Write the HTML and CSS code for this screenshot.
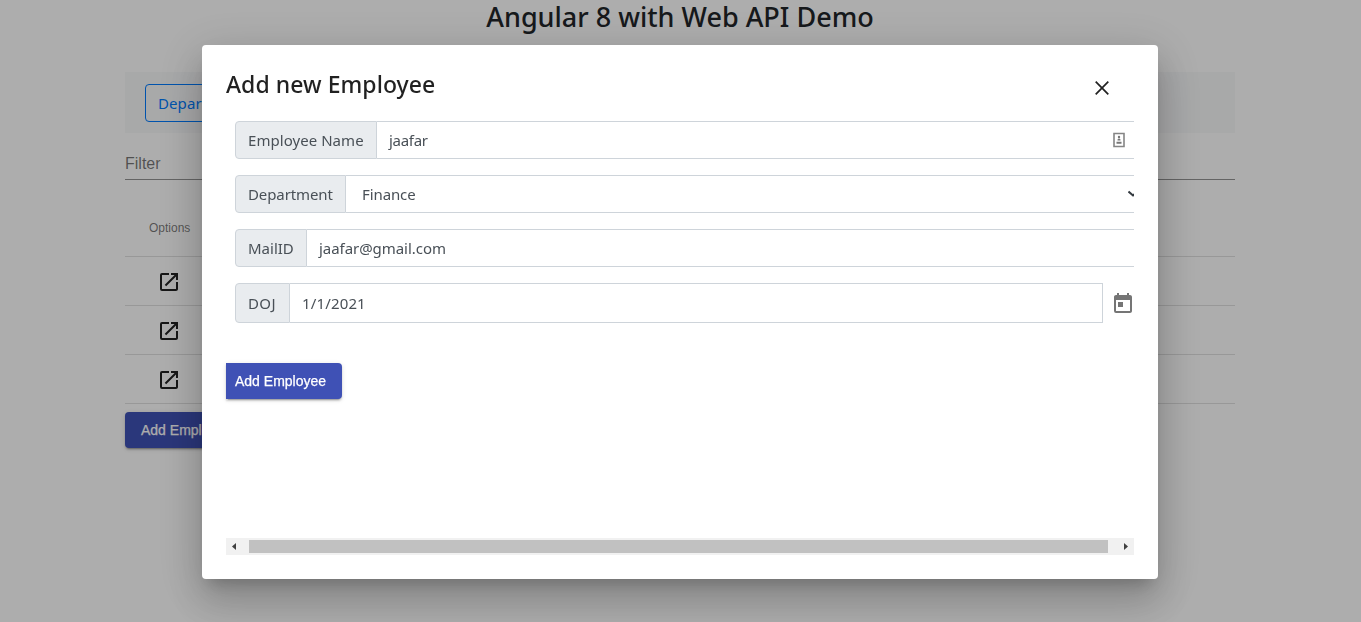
FILE: index.html
```html
<!DOCTYPE html>
<html lang="en">
<head>
<meta charset="utf-8">
<title>Angular 8 with Web API Demo</title>
<link rel="stylesheet" href="styles.css">
</head>
<body>
<main class="container">
  <h1 class="title"><span>Angular 8 with Web API Demo</span></h1>
  <nav class="navbar"><a class="nav-button">Department</a></nav>
  <div class="filter">Filter</div>
  <div class="table">
    <div class="row head"><span>Options</span></div>
    <div class="row"><svg class="edit" viewBox="0 0 24 24"><path d="M19 19H5V5h7V3H5a2 2 0 0 0-2 2v14a2 2 0 0 0 2 2h14c1.100 0 2-.9 2-2v-7h-2v7zM14 3v2h3.590l-9.830 9.830 1.410 1.410L19 6.410V10h2V3h-7z"/></svg></div>
    <div class="row"><svg class="edit" viewBox="0 0 24 24"><path d="M19 19H5V5h7V3H5a2 2 0 0 0-2 2v14a2 2 0 0 0 2 2h14c1.100 0 2-.9 2-2v-7h-2v7zM14 3v2h3.590l-9.830 9.830 1.410 1.410L19 6.410V10h2V3h-7z"/></svg></div>
    <div class="row"><svg class="edit" viewBox="0 0 24 24"><path d="M19 19H5V5h7V3H5a2 2 0 0 0-2 2v14a2 2 0 0 0 2 2h14c1.100 0 2-.9 2-2v-7h-2v7zM14 3v2h3.590l-9.830 9.830 1.410 1.410L19 6.410V10h2V3h-7z"/></svg></div>
  </div>
  <button class="button page-add">Add Employee</button>
</main>
<div class="overlay">
  <section class="dialog">
    <header class="dialog-head">
      <h2>Add new Employee</h2>
      <svg class="close" viewBox="0 0 24 24"><path d="M5.700 5.700 18.300 18.300M18.300 5.700 5.700 18.300"/></svg>
    </header>
    <div class="fields">
      <div class="group">
        <label class="label w-name">Employee Name</label>
        <div class="input"><span class="v-name">jaafar</span>
          <svg class="card" viewBox="0 0 12 16"><path d="M1 1.500h10v13H1z" fill="#fff" stroke="#858585" stroke-width="1.600"/><circle cx="6" cy="5" r="1.200"/><path d="M4.500 8.500V7.500Q6 5.500 7.500 7.500v1zM3.500 9.800h5v2h-5z"/></svg>
        </div>
      </div>
      <div class="group">
        <label class="label w-dept">Department</label>
        <div class="input select"><span class="v-dept">Finance</span>
          <svg class="chevron" viewBox="0 0 6 8"><path d="M0.500 1.500 5 5.500 9.500 1.500"/></svg>
        </div>
      </div>
      <div class="group">
        <label class="label w-mail">MailID</label>
        <div class="input"><span class="v-mail">jaafar@gmail.com</span></div>
      </div>
      <div class="group date">
        <label class="label w-doj">DOJ</label>
        <div class="input boxed"><span class="v-doj">1/1/2021</span></div>
        <svg class="calendar" viewBox="0 0 24 24"><path d="M19 3h-1V1h-2v2H8V1H6v2H5c-1.110 0-1.990.9-1.990 2L3 19a2 2 0 0 0 2 2h14c1.100 0 2-.9 2-2V5c0-1.100-.9-2-2-2zm0 16H5V8h14v11zM7 10h5v5H7z"/></svg>
      </div>
    </div>
    <button class="button dialog-add">Add Employee</button>
    <div class="scrollbar">
      <svg class="arrow" viewBox="0 0 17 17"><path d="M10 5v7L6 8.500z"/></svg>
      <div class="thumb"></div>
      <svg class="arrow" viewBox="0 0 17 17"><path d="M7 5v7l4-3.500z"/></svg>
    </div>
  </section>
</div>
</body>
</html>
```
FILE: styles.css
```css
* { box-sizing: border-box; }
body { margin: 0; height: 622px; overflow: hidden; background: #fff; color: #212529; font: 16px "Noto Sans", "Open Sans", sans-serif; }
h1, h2 { margin: 0; font-weight: 500; white-space: nowrap; }
.container { width: 1110px; margin-left: 125px; }
.title { display: flex; justify-content: center; height: 72px; font-size: 27px; line-height: 34px; }
.navbar { display: flex; height: 61px; padding: 12px 20px; background: #f8f9fa; }
.nav-button { height: 38px; padding: 0 12px; border: 1px solid #007bff; border-radius: 4px; color: #007bff; font-size: 15px; line-height: 37px; letter-spacing: .1px; }
.filter { height: 47px; padding-top: 19px; border-bottom: 1px solid #949494; color: rgba(0,0,0,.54); font: 16px/24px "Liberation Sans", sans-serif; }
.row { display: flex; align-items: center; height: 49px; padding: 2px 0 0 32px; border-bottom: 1px solid #e0e0e0; }
.head { height: 77px; padding: 20px 0 0 24px; color: rgba(0,0,0,.54); font: 12px "Liberation Sans", sans-serif; }
.edit { width: 24px; height: 24px; fill: #212121; }
.button { display: block; height: 36px; padding: 0 16px; border: 0; border-radius: 4px; background: #3f51b5; color: #fff; font: 14px/36px "Liberation Sans", sans-serif; text-align: left; white-space: nowrap; box-shadow: 0 3px 1px -2px rgba(0,0,0,.2), 0 2px 2px rgba(0,0,0,.14), 0 1px 5px rgba(0,0,0,.12); -webkit-text-stroke: .25px #fff; }
.page-add { margin-top: 8px; }
.overlay { position: fixed; inset: 0; padding: 45px 0 0 202px; background: rgba(0,0,0,.32); }
.dialog { display: flex; flex-direction: column; width: 956px; height: 534px; padding: 24px; border-radius: 4px; background: #fff; color: rgba(0,0,0,.87); box-shadow: 0 11px 15px -7px rgba(0,0,0,.2), 0 24px 38px 3px rgba(0,0,0,.14), 0 9px 46px 8px rgba(0,0,0,.12); }
.dialog-head { display: flex; justify-content: space-between; height: 52px; padding-right: 20px; }
.dialog-head h2 { font-size: 23px; line-height: 31px; letter-spacing: .05px; }
.close { width: 24px; height: 24px; margin-top: 7px; stroke: #212121; stroke-width: 1.700; }
.fields { display: flex; flex-direction: column; gap: 16px; padding-left: 9px; }
.group { display: flex; height: 38px; color: #495057; font-size: 15px; white-space: nowrap; }
.label { flex: none; padding-left: 12px; border: 1px solid #ced4da; border-radius: 4px 0 0 4px; background: #e9ecef; line-height: 37px; }
.input { display: flex; flex: 1; justify-content: space-between; align-items: center; padding-left: 12px; border: 1px solid #ced4da; border-width: 1px 0; line-height: 20px; }
.select { padding-left: 16px; }
.w-name { width: 142px; letter-spacing: .05px; }
.w-dept { width: 111px; letter-spacing: -.1px; }
.w-mail { width: 72px; }
.w-doj { width: 55px; letter-spacing: .4px; }
.v-name { letter-spacing: -.3px; }
.v-dept { letter-spacing: -.1px; }
.v-mail { letter-spacing: -.05px; }
.v-doj { letter-spacing: .15px; }
.card { width: 12px; height: 16px; margin-right: 9px; fill: #777; }
.chevron { width: 6px; height: 8px; fill: none; stroke: #343a40; stroke-width: 2; }
.date { height: 40px; }
.date .label { line-height: 39px; }
.boxed { border-right-width: 1px; }
.calendar { flex: none; width: 24px; height: 24px; margin: 9px -1px 0 8px; fill: #757575; }
.dialog-add { flex: none; width: 116px; margin-top: 40px; padding: 0 0 0 9px; border-radius: 0 4px 4px 0; }
.scrollbar { display: flex; align-items: center; height: 17px; width: 908px; margin-top: auto; background: #f1f1f1; }
.arrow { flex: none; width: 17px; height: 17px; fill: #404040; }
.thumb { flex: 1; height: 13px; margin: 0 9px 0 6px; background: #c1c1c1; }
```
